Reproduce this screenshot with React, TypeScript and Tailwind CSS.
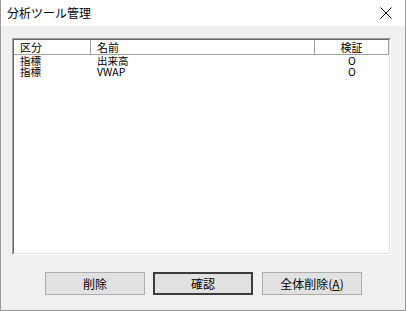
const rows = [
  { kind: "指標", name: "出来高", check: "O" },
  { kind: "指標", name: "VWAP", check: "O" },
];

function CloseIcon() {
  return (
    <svg width="12" height="12" viewBox="0 0 12 12" className="block">
      <path d="M0.5 0.5L11.5 11.5M11.5 0.5L0.5 11.5" stroke="#000" strokeWidth="1" fill="none" />
    </svg>
  );
}

function Button({ label, isDefault }: { label: React.ReactNode; isDefault?: boolean }) {
  return (
    <button
      className={
        "h-[23px] w-[100px] flex items-center justify-center bg-[#e1e1e1] text-[12px] text-black " +
        (isDefault ? "border-2 border-[#3c3c3c]" : "border border-[#adadad]")
      }
    >
      {label}
    </button>
  );
}

export default function App() {
  return (
    <div
      className="w-[406px] h-[311px] bg-[#f0f0f0] border-x border-b border-[#9a9a9a] flex flex-col text-black"
      style={{ fontFamily: '"Noto Sans CJK JP", "Liberation Sans", sans-serif' }}
    >
      {/* Title bar */}
      <div className="h-[26px] bg-white flex items-center justify-between pl-[6px] pr-[13px] shrink-0">
        <span className="text-[12px] leading-none">分析ツール管理</span>
        <CloseIcon />
      </div>

      {/* List */}
      <div className="mt-[12px] ml-[11px] mr-[14px] h-[217px] border border-t-[#a0a0a0] border-l-[#a0a0a0] border-r-white border-b-white">
        <div className="h-full border border-t-[#696969] border-l-[#696969] border-r-[#e3e3e3] border-b-[#e3e3e3] bg-white flex flex-col">
          <div className="h-[15px] flex border-b border-[#a0a0a0] text-[11px] leading-[14px]">
            <div className="w-[77px] pl-[6px] border-r border-[#a0a0a0]">区分</div>
            <div className="w-[224px] pl-[6px] border-r border-[#a0a0a0]">名前</div>
            <div className="flex-1 text-center border-r border-[#a0a0a0]">検証</div>
          </div>
          <div>
            {rows.map((r, i) => (
              <div key={i} className="h-[11px] flex items-center text-[10.5px] leading-[11px]">
                <div className="w-[77px] pl-[6px]">{r.kind}</div>
                <div className="w-[224px] pl-[6px]">{r.name}</div>
                <div className="flex-1 text-center">{r.check}</div>
              </div>
            ))}
          </div>
        </div>
      </div>

      {/* Buttons */}
      <div className="mt-[17px] ml-[44px] flex gap-[8px]">
        <Button label="削除" />
        <Button label="確認" isDefault />
        <div className="ml-[1px]">
          <Button
            label={
              <span>
                全体削除(<span className="underline">A</span>)
              </span>
            }
          />
        </div>
      </div>
    </div>
  );
}
